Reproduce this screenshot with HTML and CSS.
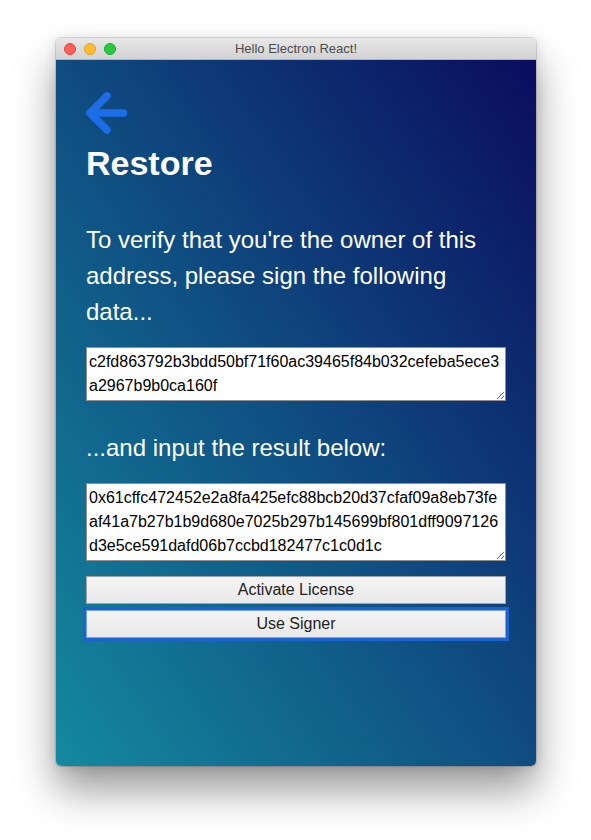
FILE: index.html
```html
<!DOCTYPE html>
<html>
<head>
<meta charset="utf-8">
<title>Hello Electron React!</title>
<link rel="stylesheet" href="styles.css">
</head>
<body>
<div class="window">
  <div class="titlebar">
    <div class="lights">
      <span class="light red"></span>
      <span class="light yellow"></span>
      <span class="light green"></span>
    </div>
    <div class="title">Hello Electron React!</div>
  </div>
  <div class="content">
    <a class="back" href="#" aria-label="Back">
      <svg width="44" height="46" viewBox="0 0 44 46">
        <path d="M23 6 L6 23 L23 40 M6 23 L39.5 23" fill="none" stroke="#1c6de6" stroke-width="7.5" stroke-linecap="round" stroke-linejoin="round"/>
      </svg>
    </a>
    <h1 class="heading">Restore</h1>
    <p class="text">To verify that you're the owner of this address, please sign the following data...</p>
    <textarea class="field field-2">c2fd863792b3bdd50bf71f60ac39465f84b032cefeba5ece3a2967b9b0ca160f</textarea>
    <p class="text label">...and input the result below:</p>
    <textarea class="field field-3">0x61cffc472452e2a8fa425efc88bcb20d37cfaf09a8eb73feaf41a7b27b1b9d680e7025b297b145699bf801dff9097126d3e5ce591dafd06b7ccbd182477c1c0d1c</textarea>
    <button class="btn first">Activate License</button>
    <button class="btn focused">Use Signer</button>
  </div>
</div>
</body>
</html>
```

FILE: styles.css
```css
html, body {
  margin: 0;
  padding: 0;
  background: #ffffff;
}

body {
  box-sizing: border-box;
  min-height: 840px;
  padding: 38px 0 74px 56px;
  font-family: "Liberation Sans", Arial, sans-serif;
}

.window {
  width: 480px;
  height: 728px;
  border-radius: 5px;
  overflow: hidden;
  display: flex;
  flex-direction: column;
  box-shadow: 0 0 0 1px rgba(0,0,0,0.12), 0 2px 12px rgba(0,0,0,0.12), 0 24px 40px rgba(0,0,0,0.4);
}

.titlebar {
  height: 22px;
  flex: 0 0 22px;
  box-sizing: border-box;
  background: linear-gradient(#e9e8e9, #d3d2d3);
  border-bottom: 1px solid #b3b3b3;
  display: flex;
  align-items: center;
  position: relative;
}

.lights {
  display: flex;
  gap: 8px;
  padding-left: 8px;
}

.light {
  width: 12px;
  height: 12px;
  border-radius: 50%;
  box-sizing: border-box;
}

.red { background: #fe5f57; border: 1px solid #e0443e; }
.yellow { background: #febc2e; border: 1px solid #dea123; }
.green { background: #28c840; border: 1px solid #1aab29; }

.title {
  position: absolute;
  left: 0;
  right: 0;
  text-align: center;
  font-size: 13px;
  color: #4c4c4c;
  pointer-events: none;
}

.content {
  flex: 1;
  padding: 30px 30px;
  background: linear-gradient(to top right, #14899f 0%, #0f4c80 50%, #0b0c5f 100%);
  color: #ffffff;
}

.back {
  display: block;
  width: 44px;
  height: 46px;
  margin-left: -2px;
}

.back svg {
  display: block;
}

.heading {
  margin: 7px 0 0;
  font-size: 34px;
  line-height: 40px;
  font-weight: bold;
}

.text {
  margin: 39px 0 0;
  font-size: 24px;
  line-height: 36px;
}

.label {
  margin-top: 29px;
}

.field {
  display: block;
  width: 420px;
  box-sizing: border-box;
  margin: 17px 0 0;
  padding: 2px;
  border: 1px solid #8f8f8f;
  font-family: "Liberation Sans", Arial, sans-serif;
  font-size: 16px;
  line-height: 24px;
  color: #000;
  background: #fff;
}

.field-2 { height: 54px; }
.field-3 { height: 78px; }

.btn {
  display: block;
  width: 420px;
  height: 28px;
  box-sizing: border-box;
  margin: 15px 0 0;
  padding: 0;
  border: 1px solid #a3a3a3;
  background: linear-gradient(#f4f4f4, #e9e9e9);
  font-family: "Liberation Sans", Arial, sans-serif;
  font-size: 16px;
  color: #222;
}

.focused {
  margin-top: 6px;
  outline: 3px solid #1c63d2;
  outline-offset: 0;
  border-color: #7aa4e0;
}
```
